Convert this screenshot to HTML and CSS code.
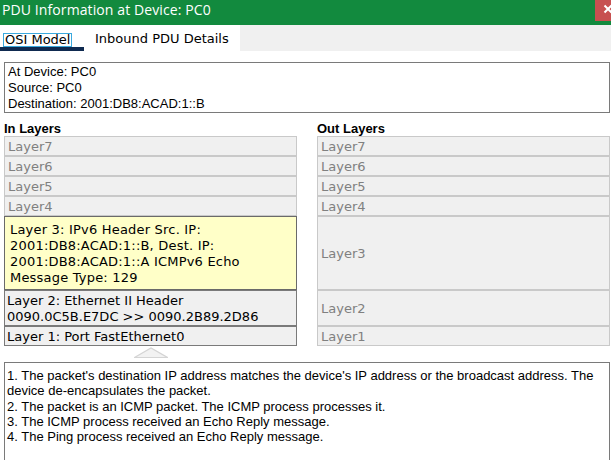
FILE: index.html
```html
<!DOCTYPE html>
<html>
<head>
<meta charset="utf-8">
<link rel="stylesheet" href="styles.css">
</head>
<body>
<div class="window">
  <div class="titlebar">
    <div class="title">PDU Information at Device: PC0</div>
    <div class="close"><svg width="16" height="21" viewBox="0 0 16 21"><path d="M9.5 5.5 L16.5 12.5 M16.5 5.5 L9.5 12.5" stroke="#fff" stroke-width="2" fill="none"/></svg></div>
  </div>
  <div class="tabs">
    <div class="tab tab-active"><span class="focus">OSI Model</span></div>
    <div class="tab tab-second">Inbound PDU Details</div>
    <div class="tab-fill"></div>
  </div>
  <div class="content">
    <div class="info">At Device: PC0<br>Source: PC0<br>Destination: 2001:DB8:ACAD:1::B</div>
    <div class="columns">
      <div class="col">
        <div class="label">In Layers</div>
        <div class="layer">Layer7</div>
        <div class="layer">Layer6</div>
        <div class="layer">Layer5</div>
        <div class="layer">Layer4</div>
        <div class="layer l3 current">Layer 3: IPv6 Header Src. IP:<br>2001:DB8:ACAD:1::B, Dest. IP:<br>2001:DB8:ACAD:1::A ICMPv6 Echo<br>Message Type: 129</div>
        <div class="layer l2 active">Layer 2: Ethernet II Header<br>0090.0C5B.E7DC &gt;&gt; 0090.2B89.2D86</div>
        <div class="layer active">Layer 1: Port FastEthernet0</div>
        <div class="arrow"><svg width="34" height="11" viewBox="0 0 34 11"><polygon points="0.5,10.5 17,1 33.5,10.5" fill="#f2f2f2" stroke="#d4d4d4" stroke-width="1.2"/></svg></div>
      </div>
      <div class="col">
        <div class="label">Out Layers</div>
        <div class="layer">Layer7</div>
        <div class="layer">Layer6</div>
        <div class="layer">Layer5</div>
        <div class="layer">Layer4</div>
        <div class="layer l3 centered">Layer3</div>
        <div class="layer l2 centered">Layer2</div>
        <div class="layer">Layer1</div>
      </div>
    </div>
    <div class="desc">1. The packet's destination IP address matches the device's IP address or the broadcast address. The device de-encapsulates the packet.<br>2. The packet is an ICMP packet. The ICMP process processes it.<br>3. The ICMP process received an Echo Reply message.<br>4. The Ping process received an Echo Reply message.</div>
  </div>
</div>
</body>
</html>
```
FILE: styles.css
```css
html, body {
  margin: 0;
  padding: 0;
  background: #ffffff;
}
body {
  width: 611px;
  height: 460px;
  overflow: hidden;
}
.window {
  width: 611px;
  font-family: "Liberation Sans", Arial, sans-serif;
  font-size: 13px;
  color: #000;
}
.titlebar {
  height: 25px;
  background: #128a3e;
  display: flex;
  align-items: flex-start;
}
.title {
  font-family: "Open Sans", "Noto Sans", sans-serif;
  font-size: 14px;
  letter-spacing: 0.1px;
  line-height: 19px;
  color: #ffffff;
  padding-left: 2px;
  white-space: nowrap;
}
.close {
  margin-left: auto;
  width: 16px;
  height: 21px;
  background: #c75050;
  overflow: hidden;
}
.close svg { display: block; }
.tabs {
  display: flex;
  height: 26px;
  font-family: "DejaVu Sans", Verdana, sans-serif;
  font-size: 13px;
}
.tab {
  box-sizing: border-box;
  height: 26px;
  background: #ffffff;
  white-space: nowrap;
}
.tab-active {
  width: 84px;
  padding: 7px 0 0 3px;
  border-bottom: 4px solid #0f2a50;
}
.focus {
  display: inline-block;
  border: 1px solid #3aa9de;
  padding: 0 1px;
  line-height: 12px;
  height: 12px;
}
.tab-second {
  width: 156px;
  padding: 6px 0 0 11px;
  line-height: 16px;
}
.tab-fill {
  flex: 1;
  background: #f0f0f0;
}
.content {
  padding: 11px 0 0 4px;
}
.info {
  box-sizing: border-box;
  width: 606px;
  height: 51px;
  border: 1px solid #7a7a7a;
  padding: 1px 3px;
  line-height: 16px;
}
.columns {
  display: grid;
  grid-template-columns: 293px 293px;
  column-gap: 20px;
}
.col {
  display: flex;
  flex-direction: column;
}
.label {
  font-weight: bold;
  padding-top: 8px;
  line-height: 15px;
}
.layer {
  box-sizing: border-box;
  height: 20px;
  border: 1px solid #c9c9c9;
  background: #f0f0f0;
  color: #808080;
  font-family: "DejaVu Sans", Verdana, sans-serif;
  font-size: 13px;
  line-height: 17px;
  padding: 1px 0 0 3px;
  white-space: nowrap;
}
.layer.l3 { height: 74px; }
.layer.l2 { height: 36px; }
.layer.centered {
  display: flex;
  align-items: center;
  padding-top: 0;
}
.layer.current {
  background: #ffffc8;
  border-color: #6a6a6a;
  color: #000;
  line-height: 16px;
  padding: 5px 0 0 5px;
  letter-spacing: 0.2px;
}
.layer.active {
  border-color: #7a7a7a;
  color: #000;
  padding-left: 2px;
}
.layer.active.l2 {
  line-height: 16px;
  padding-top: 2px;
}
.arrow {
  height: 16px;
  display: flex;
  justify-content: center;
  align-items: flex-start;
  padding-top: 1px;
  box-sizing: border-box;
}
.arrow svg { display: block; }
.desc {
  box-sizing: border-box;
  width: 606px;
  height: 120px;
  border: 1px solid #7a7a7a;
  padding: 5px 2px;
  line-height: 15.3px;
}
```
